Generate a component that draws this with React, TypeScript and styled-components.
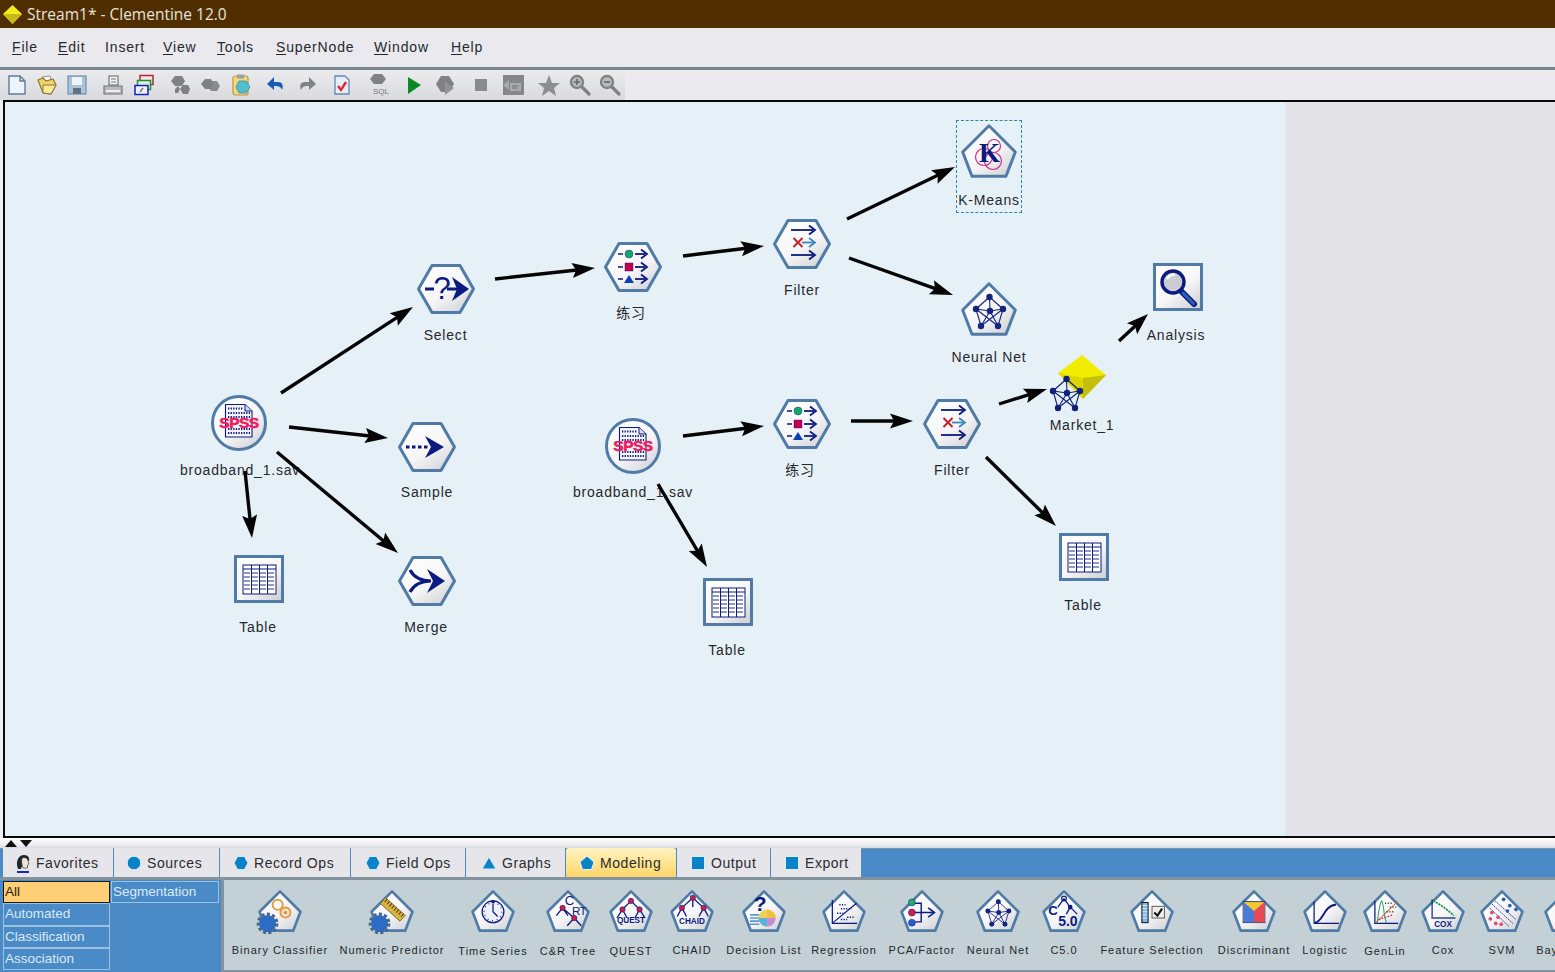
import React from "react";
import styled, { createGlobalStyle } from "styled-components";

const NAVY = "#0b1a80";
const EDGE = "#4f7ba6";
const SANS = `"Liberation Sans", Arial, "Noto Sans CJK SC", sans-serif`;

const Global = createGlobalStyle`
  html, body { margin: 0; padding: 0; background: #e8e8ec; }
  body { font-family: ${SANS}; }
`;

const Page = styled.div`
  width: 1555px; height: 972px; overflow: hidden;
  display: flex; flex-direction: column; background: #e8e8ec;
`;
const Defs = styled.svg`display: block; width: 0; height: 0;`;

/* title + menu */
const TitleBar = styled.div`
  height: 28px; flex: none; background: #502e00; display: flex; align-items: center;
  padding-left: 3px; gap: 5px; color: #e6e3de;
  font: 15.5px "Open Sans", "Noto Sans", sans-serif;
`;
const MenuBar = styled.div`
  height: 37px; flex: none; display: flex; align-items: center; padding: 0 0 2px 12px;
  background: #e9e9ee; color: #26282c; font-size: 14px; letter-spacing: 0.85px;
`;
const MenuItem = styled.span<{ $w: number }>`width: ${(p) => p.$w}px; flex: none; white-space: nowrap;`;
const Mnemonic = styled.span`text-decoration: underline; text-underline-offset: 2px;`;
const Rule = styled.div`height: 3px; flex: none; background: #76848f;`;

/* toolbar */
const ToolRow = styled.div`height: 30px; flex: none; display: flex; background: #ebebef;`;
const Toolbar = styled.div`
  width: 620px; padding-left: 5px; display: flex; align-items: center;
  background: linear-gradient(#ebebee, #d9dade);
`;
const ToolSlot = styled.span<{ $gap: number }>`
  width: 24px; height: 24px; flex: none; margin-left: ${(p) => p.$gap}px; display: block;
`;
const ToolSvg = styled.svg`display: block;`;

/* workspace */
const Workspace = styled.div`flex: 1; min-height: 0; display: flex; padding-left: 3px; background: #eef0f3;`;
const Frame = styled.div`
  flex: 1; display: flex; border: solid #0a0a0a; border-width: 2px 0 2px 2px;
`;
const Canvas = styled.div`
  position: relative; width: 1280px; background: #e6f1f7; overflow: hidden; flex: none;
`;
const Margin = styled.div`flex: 1; background: #e3e3e8;`;
const ArrowLayer = styled.svg`position: absolute; left: 0; top: 0; width: 1280px; height: 734px; z-index: 3;`;
const Node = styled.div<{ $x: number; $y: number }>`
  position: absolute; left: ${(p) => p.$x - 5}px; top: ${(p) => p.$y - 102}px; width: 0;
  display: flex; flex-direction: column; align-items: center; z-index: 1;
`;
const NodeLabel = styled.div<{ $gap: number; $dx: number }>`
  margin-top: ${(p) => p.$gap}px; margin-left: ${(p) => p.$dx * 2}px; white-space: nowrap;
  font-size: 14px; line-height: 16px; letter-spacing: 0.8px; color: #26282c;
`;
const Selection = styled.div`
  position: absolute; left: 951px; top: 18px; width: 64px; height: 91px;
  border: 1px dashed #2f86a8; z-index: 0;
`;
const IconBox = styled.svg`display: block; flex: none; overflow: visible;`;
const IconText = styled.text`font-family: "Liberation Sans", Arial, sans-serif;`;
const SerifText = styled.text`font-family: "Liberation Serif", serif;`;

/* splitter + tabs */
const Splitter = styled.div`
  height: 10px; flex: none; display: flex; align-items: center; gap: 3px; padding-left: 5px;
  background: linear-gradient(#ffffff, #ededf0 70%, #d8dadd);
`;
const TriUp = styled.span`width: 0; height: 0; border: 6px solid transparent; border-top: 0; border-bottom: 7px solid #111;`;
const TriDown = styled.span`width: 0; height: 0; border: 6px solid transparent; border-bottom: 0; border-top: 7px solid #111;`;
const Tabs = styled.div`
  height: 29px; flex: none; display: flex; padding-left: 3px; gap: 1px;
  background: #4a8bc7; box-shadow: inset 0 1px 0 #7c95ab;
`;
const Tab = styled.div<{ $w: number; $pad: number; $active?: boolean }>`
  width: ${(p) => p.$w}px; flex: none; display: flex; align-items: center; gap: 4px;
  padding-left: ${(p) => p.$pad}px;
  font-size: 14px; letter-spacing: 0.55px; color: #2a2c30; box-sizing: border-box; white-space: nowrap;
  background: ${(p) => (p.$active ? "linear-gradient(#fff3c4, #ffe38e 55%, #fdd66a)" : "#e6e6ea")};
  border-radius: ${(p) => (p.$active ? "3px 3px 0 0" : "0")};
`;
const TabDivider = styled.div`height: 3px; flex: none; background: #83939d;`;

/* bottom */
const Bottom = styled.div`height: 92px; flex: none; display: flex; background: #83939d;`;
const SidePanel = styled.div`
  width: 221px; flex: none; background: #4a8bc7; box-sizing: border-box; padding: 1px 2px 0 3px;
  display: grid; grid-template-columns: 107px 108px; grid-auto-flow: column;
  grid-template-rows: repeat(4, 22.3px); column-gap: 1px;
`;
const SideItem = styled.div<{ $on?: boolean }>`
  box-sizing: border-box; padding-left: 1px; font-size: 13.5px; line-height: 19px; white-space: nowrap; overflow: hidden;
  border: 1px solid ${(p) => (p.$on ? "#1c1c1c" : "#9dc0de")};
  background: ${(p) => (p.$on ? "#ffcf75" : "#4a8bc7")};
  color: ${(p) => (p.$on ? "#2a2310" : "#dbe9f5")};
`;
const Palette = styled.div`
  flex: 1; min-width: 0; margin: 0 0 2px 3px; background: #c3d1d7; display: flex; overflow: hidden; padding-left: 3px;
`;
const Tool = styled.div<{ $w: number }>`
  width: ${(p) => p.$w}px; flex: none; display: flex; flex-direction: column; align-items: center; padding-top: 10px;
`;
const ToolLabel = styled.div<{ $low?: boolean }>`
  margin-top: ${(p) => (p.$low ? 13 : 12)}px; white-space: nowrap; font-size: 11px; line-height: 13px;
  letter-spacing: 1px; color: #24262a;
`;

/* ---- icon shapes ---- */
const Hex = ({ children }: { children?: React.ReactNode }) => (
  <IconBox width={58} height={50} viewBox="0 0 58 50">
    <polygon points="1.5,25 15,1.5 43,1.5 56.5,25 43,48.5 15,48.5" fill="url(#nodeFill)" stroke={EDGE} strokeWidth={3} strokeLinejoin="round" />
    {children}
  </IconBox>
);
const Penta = ({ children, small }: { children?: React.ReactNode; small?: boolean }) => (
  <IconBox width={small ? 44 : 56} height={small ? 42 : 54} viewBox="0 0 56 54">
    <polygon points="28,1.8 54.3,28 45,52.3 11,52.3 1.7,28" fill="url(#nodeFill)" stroke={EDGE} strokeWidth={small ? 3.4 : 3} strokeLinejoin="round" />
    {children}
  </IconBox>
);
const Round = ({ children }: { children?: React.ReactNode }) => (
  <IconBox width={56} height={56} viewBox="0 0 56 56">
    <circle cx={28} cy={28} r={26.5} fill="url(#nodeFill)" stroke={EDGE} strokeWidth={3} />
    {children}
  </IconBox>
);
const Square = ({ children }: { children?: React.ReactNode }) => (
  <IconBox width={50} height={48} viewBox="0 0 50 48">
    <rect x={1.5} y={1.5} width={47} height={45} fill="url(#nodeFill)" stroke={EDGE} strokeWidth={3} />
    {children}
  </IconBox>
);

const Arrowed = ({ x1, x2, y, c = NAVY, w = 1.8 }: { x1: number; x2: number; y: number; c?: string; w?: number }) => (
  <>
    <line x1={x1} y1={y} x2={x2 - 2} y2={y} stroke={c} strokeWidth={w} />
    <polyline points={`${x2 - 6},${y - 4.5} ${x2},${y} ${x2 - 6},${y + 4.5}`} fill="none" stroke={c} strokeWidth={w} />
  </>
);

const SelectGlyph = () => (
  <>
    <rect x={8} y={23.5} width={9} height={3} fill={NAVY} />
    <IconText x={25} y={35} fontSize={31} fontWeight={400} textAnchor="middle" fill={NAVY}>?</IconText>
    <rect x={30} y={23.5} width={12} height={3} fill={NAVY} />
    <polygon points="35,13 52,25 35,37 40,25" fill={NAVY} />
  </>
);
const SampleGlyph = () => (
  <>
    <line x1={8} y1={25} x2={32} y2={25} stroke={NAVY} strokeWidth={3} strokeDasharray="3.5 2.5" />
    <polygon points="27,14 46,25 27,36 33,25" fill={NAVY} />
  </>
);
const MergeGlyph = () => (
  <>
    <path d="M12 14 Q18 25 33 25 M12 36 Q18 25 33 25" fill="none" stroke={NAVY} strokeWidth={3.2} />
    <polygon points="29,13 47,25 29,37 35,25" fill={NAVY} />
  </>
);
const TypeGlyph = () => (
  <>
    {[12, 25, 37].map((y) => (
      <g key={y}>
        <line x1={14} y1={y} x2={19} y2={y} stroke={NAVY} strokeWidth={1.5} />
        <Arrowed x1={31} x2={43} y={y} />
      </g>
    ))}
    <circle cx={25} cy={12} r={4} fill="#14a868" stroke={NAVY} strokeWidth={0.4} />
    <rect x={21} y={21} width={8} height={8} fill="#c4004e" stroke={NAVY} strokeWidth={0.4} />
    <polygon points="25,33 30,41 20,41" fill="#0a3fb5" />
  </>
);
const FilterGlyph = () => (
  <>
    <Arrowed x1={18} x2={42} y={11} />
    <Arrowed x1={29} x2={42} y={23.5} c="#3d86b8" />
    <Arrowed x1={18} x2={42} y={36} />
    <path d="M20.5 19 L29.5 28 M29.5 19 L20.5 28" stroke="#c3202c" strokeWidth={2} />
  </>
);
const TableGlyph = () => (
  <g stroke={NAVY} fill="none" strokeWidth={1}>
    <rect x={9} y={10} width={33} height={29} fill="#fff" />
    <path d="M9 14H42" strokeWidth={1.2} />
    <path d="M17.5 10V39M25.5 10V39M33.5 10V39" />
    <path d="M9 18H42M9 22H42M9 26H42M9 30H42M9 34H42" strokeDasharray="6 2" strokeDashoffset={-1} strokeWidth={0.9} />
  </g>
);
const MagnifierGlyph = () => (
  <>
    <line x1={29} y1={29} x2={41} y2={41} stroke={NAVY} strokeWidth={6} strokeLinecap="round" />
    <line x1={30} y1={30} x2={40.5} y2={40.5} stroke="#2a62b4" strokeWidth={3} strokeLinecap="round" />
    <circle cx={20} cy={19} r={11} fill="#c9ccd2" stroke={NAVY} strokeWidth={3.4} />
    <path d="M14 16 Q17 11 22 12" stroke="#fff" strokeWidth={2.5} fill="none" />
  </>
);
const NetGlyph = ({ c = "#14247f" }: { c?: string }) => {
  const P: [number, number][] = [[28.5, 15], [15, 27], [29, 29], [42, 27], [20, 44], [37, 44]];
  const L = [[0, 1], [0, 2], [0, 3], [1, 2], [2, 3], [1, 4], [1, 5], [3, 4], [3, 5], [2, 4], [2, 5]];
  return (
    <g>
      {L.map(([a, b], i) => (
        <line key={i} x1={P[a][0]} y1={P[a][1]} x2={P[b][0]} y2={P[b][1]} stroke={c} strokeWidth={1.1} />
      ))}
      {P.map(([x, y], i) => <circle key={i} cx={x} cy={y} r={3.2} fill={c} />)}
    </g>
  );
};
const KMeansGlyph = () => (
  <>
    <g fill="none" stroke="#cc2f7f" strokeWidth={1.2}>
      <circle cx={23} cy={33} r={8.5} />
      <circle cx={33} cy={22} r={6.5} />
      <circle cx={32} cy={37} r={8.5} />
    </g>
    <SerifText x={28.5} y={38} fontSize={27} fontWeight={700} textAnchor="middle" fill={NAVY}>K</SerifText>
  </>
);
const SpssGlyph = () => (
  <>
    <path d="M14.5 9.5 H34 L41 16 V42 H14.5 Z" fill="#f4f4fa" stroke={NAVY} strokeWidth={1.1} />
    <path d="M34 9.5 V16 H41" fill="#d5d9ee" stroke={NAVY} strokeWidth={1} />
    <path d="M17 13.5H32M17 18H39M17 22H39M17 34H39M17 38H39" stroke={NAVY} strokeWidth={2.2} strokeDasharray="1.3 1.3" />
    <IconText x={28} y={33} fontSize={15.5} fontWeight={700} textAnchor="middle" fill="#ee1c5e" stroke="#ee1c5e" strokeWidth={0.6} letterSpacing={-0.5}>SPSS</IconText>
  </>
);
const MarketGlyph = () => (
  <IconBox width={56} height={54} viewBox="0 0 56 54">
    <polygon points="28,0 52,20 29,44 4,18" fill="#f2ec00" />
    <polygon points="52,20 29,23 29,44" fill="#c4be0c" />
    <polygon points="4,18 29,23 29,44" fill="#dcd604" />
    <g transform="translate(-16,9)">
      <NetGlyph c="#101f78" />
    </g>
  </IconBox>
);

/* palette glyphs (56x54 box) */
const Gear = () => (
  <g transform="translate(12,43)">
    <circle r={12} fill="none" stroke="#4d6580" strokeWidth={4} strokeDasharray="4 2.9" />
    <circle r={11} fill="#2d6cc2" />
  </g>
);
const Knot = ({ x, y }: { x: number; y: number }) => <circle cx={x} cy={y} r={3.4} fill="#d01c48" stroke={NAVY} strokeWidth={0.8} />;
const BinaryGlyph = () => (
  <>
    <circle cx={25} cy={19} r={6.5} fill="none" stroke="#e09a4a" strokeWidth={2.4} />
    <circle cx={35} cy={29} r={6.5} fill="#f6e2c0" stroke="#e09a4a" strokeWidth={2.4} />
    <circle cx={35} cy={29} r={2} fill="#d98a30" />
    <Gear />
  </>
);
const NumericGlyph = () => (
  <>
    <g transform="rotate(42 29 25)">
      <rect x={12} y={20} width={34} height={10} fill="#dcb43e" stroke="#6a5a20" strokeWidth={1} />
      <path d="M15 20V25M19 20V25M23 20V25M27 20V25M31 20V25M35 20V25M39 20V25M43 20V25" stroke="#3d3416" strokeWidth={1.2} />
    </g>
    <Gear />
  </>
);
const ClockGlyph = () => (
  <>
    <circle cx={28} cy={28} r={14} fill="#eef1f8" stroke={NAVY} strokeWidth={1.6} />
    <circle cx={28} cy={28} r={11.5} fill="none" stroke={NAVY} strokeWidth={1.6} strokeDasharray="1.2 4.8" />
    <path d="M28 18V28L34 34" fill="none" stroke={NAVY} strokeWidth={1.6} />
    <rect x={26} y={13} width={4} height={4} fill={NAVY} />
  </>
);
const TreeLines = ({ d }: { d: string }) => <path d={d} fill="none" stroke={NAVY} strokeWidth={1.7} />;
const CrtGlyph = () => (
  <>
    <TreeLines d="M21 23L13 33M21 23L28 33M36 36L27 46M36 36L45 46M21 23L36 36" />
    <IconText x={30} y={19} fontSize={17} fill={NAVY} textAnchor="middle">C</IconText>
    <IconText x={42} y={32} fontSize={15} fill={NAVY} textAnchor="middle" letterSpacing={-1}>RT</IconText>
    <Knot x={21} y={23} /><Knot x={36} y={36} />
  </>
);
const QuestGlyph = () => (
  <>
    <TreeLines d="M28 14L17 25M28 14L39 25M17 25L10 36M17 25L23 36M39 25L33 36M39 25L46 36" />
    <Knot x={28} y={14} /><Knot x={17} y={25} /><Knot x={39} y={25} />
    <IconText x={28} y={43} fontSize={10.5} fontWeight={700} fill={NAVY} textAnchor="middle">QUEST</IconText>
  </>
);
const ChaidGlyph = () => (
  <>
    <TreeLines d="M29 10V22M29 10L15 23M29 10L43 23M15 23L9 34M15 23L21 34M43 23L37 34M43 23L49 34" />
    <Knot x={29} y={10} /><Knot x={15} y={23} /><Knot x={43} y={23} />
    <IconText x={28} y={44} fontSize={10.5} fontWeight={700} fill={NAVY} textAnchor="middle">CHAID</IconText>
  </>
);
const DecisionGlyph = () => (
  <>
    <IconText x={23} y={27} fontSize={27} fontWeight={700} fill={NAVY} textAnchor="middle">?</IconText>
    <path d="M10 32H22M10 36H22M10 40H22M10 44H22" stroke="#5b9ad6" strokeWidth={2} />
    <circle cx={32} cy={36} r={11} fill="#f0d056" />
    <path d="M32 36V25A11 11 0 0 1 43 36Z" fill="#f0c040" />
    <path d="M32 36H43A11 11 0 0 1 32 47Z" fill="#c88ad8" />
    <path d="M32 36V47A11 11 0 0 1 21 36Z" fill="#58b0e0" />
  </>
);
const RegressionGlyph = () => (
  <>
    <path d="M13 13V43H45" fill="none" stroke={NAVY} strokeWidth={1.6} />
    <line x1={14} y1={42} x2={44} y2={17} stroke={NAVY} strokeWidth={1.5} />
    <path d="M22 19H30M24 24H38M19 30H27M32 35H42M24 38H32" stroke={NAVY} strokeWidth={2} strokeDasharray="1.6 1.8" />
  </>
);
const PcaGlyph = () => (
  <>
    <path d="M19 17H27V41H19M14 29H42" fill="none" stroke={NAVY} strokeWidth={1.8} />
    <polyline points="36,23 44,29 36,35" fill="none" stroke={NAVY} strokeWidth={2} />
    <circle cx={15} cy={16} r={4.5} fill="#22aa70" stroke={NAVY} strokeWidth={0.6} />
    <circle cx={15} cy={29} r={4.5} fill="#cc1c4c" stroke={NAVY} strokeWidth={0.6} />
    <circle cx={15} cy={42} r={4.5} fill="#2a5cd0" stroke={NAVY} strokeWidth={0.6} />
  </>
);
const C50Glyph = () => (
  <>
    <TreeLines d="M28 11L20 22M28 11L36 22M36 22L31 31M36 22L45 31" />
    <circle cx={28} cy={11} r={3} fill="none" stroke={NAVY} strokeWidth={1.6} />
    <circle cx={36} cy={22} r={3} fill={NAVY} />
    <IconText x={14} y={32} fontSize={17} fontWeight={700} fill={NAVY} textAnchor="middle">C</IconText>
    <IconText x={33} y={46} fontSize={18} fontWeight={700} fill={NAVY} textAnchor="middle">5.0</IconText>
  </>
);
const FeatureGlyph = () => (
  <>
    <rect x={15} y={16} width={8} height={26} fill="#7fb6e0" stroke="#111" strokeWidth={1.3} />
    <path d="M16 20H22M16 24H22M16 28H22M16 32H22M16 36H22" stroke="#e8f2fa" strokeWidth={1.2} />
    <rect x={28} y={21} width={16} height={15} fill="#eee" stroke="#555" strokeWidth={1.2} />
    <path d="M31 29L35 33L41 24" fill="none" stroke="#111" strokeWidth={2.6} />
  </>
);
const DiscGlyph = () => (
  <>
    <rect x={14} y={15} width={28} height={27} fill="#f0c830" stroke={NAVY} strokeWidth={1} />
    <polygon points="14.5,15.5 28,27 28,41.5 14.5,41.5" fill="#4a7ad8" />
    <polygon points="41.5,15.5 28,27 28,41.5 41.5,41.5" fill="#e84a58" />
  </>
);
const LogisticGlyph = () => (
  <>
    <path d="M14 15V43H46" fill="none" stroke={NAVY} strokeWidth={1.6} />
    <path d="M15 42C26 41 26 20 42 19" fill="none" stroke={NAVY} strokeWidth={2.4} />
  </>
);
const GenLinGlyph = () => (
  <>
    <path d="M15 14V43H45" fill="none" stroke={NAVY} strokeWidth={1.6} />
    <path d="M16 42L44 15" stroke="#e0702a" strokeWidth={1.3} />
    <path d="M18 42C20 25 22 16 24 14C27 20 26 34 30 42" fill="none" stroke="#2aa060" strokeWidth={1.3} />
    <path d="M28 17H38M34 22H44M30 28H40" stroke="#333" strokeWidth={1.8} strokeDasharray="1.4 2.2" />
    <path d="M20 38L38 32" stroke="#d02060" strokeWidth={1.6} strokeDasharray="2 2" />
  </>
);
const CoxGlyph = () => (
  <>
    <path d="M14 12V35" fill="none" stroke={NAVY} strokeWidth={1.5} />
    <path d="M13 36H44" stroke={NAVY} strokeWidth={1.6} />
    <path d="M15 14C24 18 32 24 42 33" fill="none" stroke="#1f9a50" strokeWidth={2.2} strokeDasharray="3 1" />
    <IconText x={28} y={47} fontSize={10.5} fontWeight={700} fill={NAVY} textAnchor="middle">COX</IconText>
  </>
);
const SvmGlyph = () => (
  <>
    <path d="M15 18L42 43M19 14L46 38M12 23L37 47" stroke={NAVY} strokeWidth={1} strokeDasharray="2.5 1" />
    {[[30, 12], [38, 20], [46, 25], [35, 27]].map(([x, y]) => <circle key={x} cx={x} cy={y} r={2.4} fill="#2a5fb5" />)}
    {[[15, 29], [23, 35], [13, 37], [27, 44], [20, 43]].map(([x, y]) => <circle key={x} cx={x} cy={y} r={2.4} fill="#e24d6e" />)}
  </>
);
const BayesGlyph = () => (
  <>
    <circle cx={28} cy={22} r={4} fill="#cc1c4c" />
    <path d="M28 22L18 36M28 22L38 36" stroke={NAVY} strokeWidth={1.4} />
  </>
);

/* toolbar icons */
const Tb = ({ children }: { children: React.ReactNode }) => (
  <ToolSvg width={24} height={24} viewBox="0 0 24 24">{children}</ToolSvg>
);
const G = "#808182";
const toolIcons: [number, React.ReactNode][] = [
  [0, <path d="M4 3H15L20 8V21H4Z M15 3V8H20" fill="#eef4fb" stroke="#5c7a9c" strokeWidth={1.4} />],
  [6, <>
    <path d="M7 4L15 3L17 11L9 12Z" fill="#fff" stroke="#777" strokeWidth={0.8} />
    <path d="M3 7L8 5L11 8L18 6L21 12L16 21L8 20Z" fill="#f0d566" stroke="#8b7a36" strokeWidth={1.2} />
    <path d="M8 12L21 12L16 21L8 20Z" fill="#fbe99a" stroke="#8b7a36" strokeWidth={1} />
  </>],
  [6, <>
    <rect x={3} y={3} width={18} height={18} fill="#a9c4dc" stroke="#6d91b2" strokeWidth={1.2} />
    <rect x={7} y={4} width={10} height={8} fill="#f0f4f8" />
    <rect x={8} y={15} width={8} height={6} fill="#66717c" />
  </>],
  [12, <>
    <rect x={8} y={3} width={9} height={9} fill="#f2f2f4" stroke="#777" strokeWidth={1.2} />
    <path d="M10 6H15M10 9H15" stroke="#777" />
    <path d="M3 13H21V21H3Z" fill="#b9bbbe" stroke="#777" strokeWidth={1.2} />
    <path d="M5 18H19" stroke="#eee" strokeWidth={2} />
  </>],
  [7, <>
    <rect x={8} y={2.5} width={13} height={9} fill="#f4e6e8" stroke="#b02838" strokeWidth={1.5} />
    <rect x={5.5} y={7.5} width={13} height={9} fill="#dff0df" stroke="#16962c" strokeWidth={1.5} />
    <rect x={3} y={12.5} width={13} height={9} fill="#eef0fb" stroke="#1420c0" strokeWidth={1.5} />
    <path d="M8 19L11 15" stroke="#777" strokeWidth={1.4} />
  </>],
  [12, <>
    <polygon points="3,8 7,3 14,3 17,8 14,13 7,13" fill={G} />
    <polygon points="12,16 15,12 20,12 22,16 20,21 15,21" fill={G} />
    <polygon points="7,16 10,13 12,16 10,20 7,20" fill={G} />
  </>],
  [6, <>
    <polygon points="3,11 7,6 13,6 15,10 13,16 7,16" fill={G} />
    <polygon points="10,13 13,8 19,8 22,13 19,18 13,18" fill={G} opacity={0.9} />
  </>],
  [7, <>
    <rect x={4} y={3} width={15} height={19} rx={2} fill="#f3d97e" stroke="#b79b40" strokeWidth={1.2} />
    <rect x={8} y={1.5} width={7} height={4} fill="#9aa0a6" />
    <polygon points="7,14 10,8 17,8 21,14 17,20 10,20" fill="#53bdd0" stroke="#3a8aa0" strokeWidth={0.8} />
  </>],
  [11, <path d="M5 9H14C18 9 20 12 18 17C17 14 15 13 12 13H10V17L3 11L10 4V9" fill="#1b5db4" />],
  [7, <path d="M19 9H10C6 9 4 12 6 17C7 14 9 13 12 13H14V17L21 11L14 4V9" fill={G} />],
  [11, <>
    <path d="M5 3H15L19 7V21H5Z" fill="#e8eef8" stroke="#6a84b4" strokeWidth={1.3} />
    <path d="M8 13L11 17L16 9" fill="none" stroke="#e0282c" strokeWidth={2.4} />
  </>],
  [13, <>
    <polygon points="3,6 7,1 15,1 19,6 15,11 7,11" fill={G} />
    <IconText x={14} y={21} fontSize={8} fill="#777" textAnchor="middle">SQL</IconText>
  </>],
  [11, <polygon points="6,4 19,12 6,21" fill="#0b8a22" />],
  [7, <>
    <polygon points="3,11 8,3 16,3 21,11 16,19 8,19" fill={G} />
    <polygon points="12,9 21,15 12,22" fill="#929294" />
  </>],
  [12, <rect x={6} y={6} width={12} height={12} fill="#8a8b8c" />],
  [8, <>
    <rect x={2} y={2} width={21} height={20} fill="#85878a" />
    <path d="M9 10H20V18H9Z M2 12L8 7V17Z" fill="#a8aaad" />
    <path d="M11 13H18M11 15H16" stroke="#6e7073" />
  </>],
  [12, <polygon points="12,2 15,10 23,10 17,15 19,23 12,18 5,23 7,15 1,10 9,10" fill="#8d8e90" />],
  [7, <>
    <line x1={14} y1={14} x2={21} y2={21} stroke={G} strokeWidth={3.2} strokeLinecap="round" />
    <circle cx={9} cy={9} r={6} fill="#bbb" stroke={G} strokeWidth={2.4} />
    <path d="M6 9H12M9 6V12" stroke="#666" strokeWidth={1.6} />
  </>],
  [6, <>
    <line x1={14} y1={14} x2={21} y2={21} stroke={G} strokeWidth={3.2} strokeLinecap="round" />
    <circle cx={9} cy={9} r={6} fill="#bbb" stroke={G} strokeWidth={2.4} />
    <path d="M6 9H12" stroke="#666" strokeWidth={1.6} />
  </>],
];

/* data */
type Kind = "hex" | "penta" | "round" | "square" | "market";
const wrap = (k: Kind, g?: React.ReactNode) => {
  if (k === "hex") return <Hex>{g}</Hex>;
  if (k === "penta") return <Penta>{g}</Penta>;
  if (k === "round") return <Round>{g}</Round>;
  if (k === "square") return <Square>{g}</Square>;
  return <MarketGlyph />;
};
const nodes: { x: number; y: number; k: Kind; g?: React.ReactNode; t: string; gap: number; dx?: number }[] = [
  { x: 239, y: 395, k: "round", g: <SpssGlyph />, t: "broadband_1.sav", gap: 11, dx: 1 },
  { x: 445.5, y: 264, k: "hex", g: <SelectGlyph />, t: "Select", gap: 13 },
  { x: 427, y: 422, k: "hex", g: <SampleGlyph />, t: "Sample", gap: 12 },
  { x: 427, y: 556, k: "hex", g: <MergeGlyph />, t: "Merge", gap: 13, dx: -1 },
  { x: 259, y: 555, k: "square", g: <TableGlyph />, t: "Table", gap: 16, dx: -1 },
  { x: 633, y: 242, k: "hex", g: <TypeGlyph />, t: "练习", gap: 13, dx: -2 },
  { x: 802, y: 219, k: "hex", g: <FilterGlyph />, t: "Filter", gap: 13 },
  { x: 989, y: 124, k: "penta", g: <KMeansGlyph />, t: "K-Means", gap: 14 },
  { x: 989, y: 282, k: "penta", g: <NetGlyph />, t: "Neural Net", gap: 13 },
  { x: 1177.5, y: 263, k: "square", g: <MagnifierGlyph />, t: "Analysis", gap: 16, dx: -1.5 },
  { x: 1082, y: 355, k: "market", t: "Market_1", gap: 8 },
  { x: 633, y: 418, k: "round", g: <SpssGlyph />, t: "broadband_1.sav", gap: 10 },
  { x: 802, y: 399, k: "hex", g: <TypeGlyph />, t: "练习", gap: 13, dx: -2 },
  { x: 952, y: 399, k: "hex", g: <FilterGlyph />, t: "Filter", gap: 13 },
  { x: 728, y: 578, k: "square", g: <TableGlyph />, t: "Table", gap: 16, dx: -1 },
  { x: 1084, y: 533, k: "square", g: <TableGlyph />, t: "Table", gap: 16, dx: -1 },
];
const arrows = [
  [281, 393, 413, 307], [289, 427, 388, 438], [277, 452, 398, 553], [245, 471, 252, 538],
  [495, 279, 595, 268], [683, 256, 764, 246], [847, 219, 955, 167], [849, 258, 953, 295],
  [683, 436, 764, 426], [851, 421, 913, 421], [999, 404, 1047, 389], [1119, 341, 1148, 314],
  [986, 457, 1056, 526], [658, 484, 707, 567],
];
const tabs: { w: number; pad: number; t: string; i: React.ReactNode; on?: boolean }[] = [
  { w: 110, pad: 11, t: "Favorites", i: <>
    <path d="M4 16C1 8 5 2 10 2C14 2 16 5 15 8L13 7C11 8 11 10 12 12C11 14 8 13 8 13L7 16Z" fill="#20262c" />
    <path d="M8 5C11 4 14 5 14 8L15 11L13.5 12V15L9 15C8 12 7 9 8 5Z" fill="#f0e4da" stroke="#222" strokeWidth={0.6} />
    <path d="M3 18H15V20H3Z" fill="#1a28b0" />
  </> },
  { w: 105, pad: 11, t: "Sources", i: <circle cx={9} cy={10} r={6.8} fill="#0a82c8" stroke="#d8ecf8" /> },
  { w: 130, pad: 12, t: "Record Ops", i: <polygon points="2,10 5.5,3.5 12.5,3.5 16,10 12.5,16.5 5.5,16.5" fill="#0a82c8" stroke="#d8ecf8" /> },
  { w: 114, pad: 13, t: "Field Ops", i: <polygon points="2,10 5.5,3.5 12.5,3.5 16,10 12.5,16.5 5.5,16.5" fill="#0a82c8" stroke="#d8ecf8" /> },
  { w: 99, pad: 14, t: "Graphs", i: <polygon points="9,4 16,16 2,16" fill="#0a82c8" stroke="#d8ecf8" /> },
  { w: 110, pad: 12, t: "Modeling", on: true, i: <polygon points="9,3 16,9 13.5,16.5 4.5,16.5 2,9" fill="#0a82c8" stroke="#e8f4fb" /> },
  { w: 93, pad: 12, t: "Output", i: <rect x={2.5} y={3.5} width={13} height={13} fill="#0a82c8" stroke="#d8ecf8" /> },
  { w: 90, pad: 12, t: "Export", i: <rect x={2.5} y={3.5} width={13} height={13} fill="#0a82c8" stroke="#d8ecf8" /> },
];
const tools: { w: number; t: string; g: React.ReactNode; low?: boolean }[] = [
  { w: 106, t: "Binary Classifier", g: <BinaryGlyph /> },
  { w: 118, t: "Numeric Predictor", g: <NumericGlyph /> },
  { w: 84, t: "Time Series", g: <ClockGlyph />, low: true },
  { w: 66, t: "C&R Tree", g: <CrtGlyph />, low: true },
  { w: 60, t: "QUEST", g: <QuestGlyph />, low: true },
  { w: 62, t: "CHAID", g: <ChaidGlyph /> },
  { w: 82, t: "Decision List", g: <DecisionGlyph /> },
  { w: 78, t: "Regression", g: <RegressionGlyph /> },
  { w: 78, t: "PCA/Factor", g: <PcaGlyph /> },
  { w: 74, t: "Neural Net", g: <NetGlyph /> },
  { w: 58, t: "C5.0", g: <C50Glyph /> },
  { w: 118, t: "Feature Selection", g: <FeatureGlyph /> },
  { w: 86, t: "Discriminant", g: <DiscGlyph /> },
  { w: 56, t: "Logistic", g: <LogisticGlyph /> },
  { w: 64, t: "GenLin", g: <GenLinGlyph />, low: true },
  { w: 52, t: "Cox", g: <CoxGlyph /> },
  { w: 66, t: "SVM", g: <SvmGlyph /> },
  { w: 62, t: "Bayes Net", g: <BayesGlyph /> },
];
const menus: [string, string, number][] = [["F", "ile", 46], ["E", "dit", 47], ["", "Insert", 58], ["V", "iew", 54], ["T", "ools", 59], ["S", "uperNode", 98], ["W", "indow", 77], ["H", "elp", 50]];

const Arrow = ({ a }: { a: number[] }) => {
  const [x1, y1, x2, y2] = a;
  const d = Math.hypot(x2 - x1, y2 - y1);
  const ux = (x2 - x1) / d, uy = (y2 - y1) / d;
  const L = Math.min(23, d * 0.55), W = 7.5;
  const bx = x2 - ux * L, by = y2 - uy * L;
  const pts = [[x2, y2], [bx - uy * W, by + ux * W], [bx + ux * 4, by + uy * 4], [bx + uy * W, by - ux * W]];
  return (
    <g>
      <line x1={x1} y1={y1} x2={bx + ux * 5} y2={by + uy * 5} stroke="#050505" strokeWidth={3.4} />
      <polygon points={pts.map((p) => p.join(",")).join(" ")} fill="#050505" />
    </g>
  );
};

export default function App() {
  return (
    <Page>
      <Global />
      <Defs aria-hidden="true">
        <defs>
          <linearGradient id="nodeFill" x1="0.1" y1="0" x2="0.9" y2="1">
            <stop offset="0" stopColor="#ffffff" />
            <stop offset="0.55" stopColor="#f6f6f8" />
            <stop offset="1" stopColor="#cfd0d4" />
          </linearGradient>
        </defs>
      </Defs>
      <TitleBar>
        <svg width={19} height={19} viewBox="0 0 19 19">
          <polygon points="9.5,0 19,9 9.5,19 0,9" fill="#f5ec20" />
          <polygon points="0,9 19,9 9.5,19" fill="#c9b816" />
        </svg>
        Stream1* - Clementine 12.0
      </TitleBar>
      <MenuBar>
        {menus.map(([m, r, w]) => (
          <MenuItem key={r} $w={w}>{m && <Mnemonic>{m}</Mnemonic>}{r}</MenuItem>
        ))}
      </MenuBar>
      <Rule />
      <ToolRow>
        <Toolbar>
          {toolIcons.map(([gap, icon], i) => (
            <ToolSlot key={i} $gap={gap}><Tb>{icon}</Tb></ToolSlot>
          ))}
        </Toolbar>
      </ToolRow>
      <Workspace>
        <Frame>
          <Canvas>
            <Selection />
            {nodes.map((n, i) => (
              <Node key={i} $x={n.x} $y={n.y}>
                {wrap(n.k, n.g)}
                <NodeLabel $gap={n.gap} $dx={n.dx ?? 0}>{n.t}</NodeLabel>
              </Node>
            ))}
            <ArrowLayer viewBox="5 102 1280 734">
              {arrows.map((a, i) => <Arrow key={i} a={a} />)}
            </ArrowLayer>
          </Canvas>
          <Margin />
        </Frame>
      </Workspace>
      <Splitter><TriUp /><TriDown /></Splitter>
      <Tabs>
        {tabs.map((t) => (
          <Tab key={t.t} $w={t.w} $pad={t.pad} $active={t.on}>
            <svg width={18} height={20} viewBox="0 0 18 20">{t.i}</svg>
            {t.t}
          </Tab>
        ))}
      </Tabs>
      <TabDivider />
      <Bottom>
        <SidePanel>
          <SideItem $on>All</SideItem>
          <SideItem>Automated</SideItem>
          <SideItem>Classification</SideItem>
          <SideItem>Association</SideItem>
          <SideItem>Segmentation</SideItem>
        </SidePanel>
        <Palette>
          {tools.map((t) => (
            <Tool key={t.t} $w={t.w}>
              <Penta small>{t.g}</Penta>
              <ToolLabel $low={t.low}>{t.t}</ToolLabel>
            </Tool>
          ))}
        </Palette>
      </Bottom>
    </Page>
  );
}
